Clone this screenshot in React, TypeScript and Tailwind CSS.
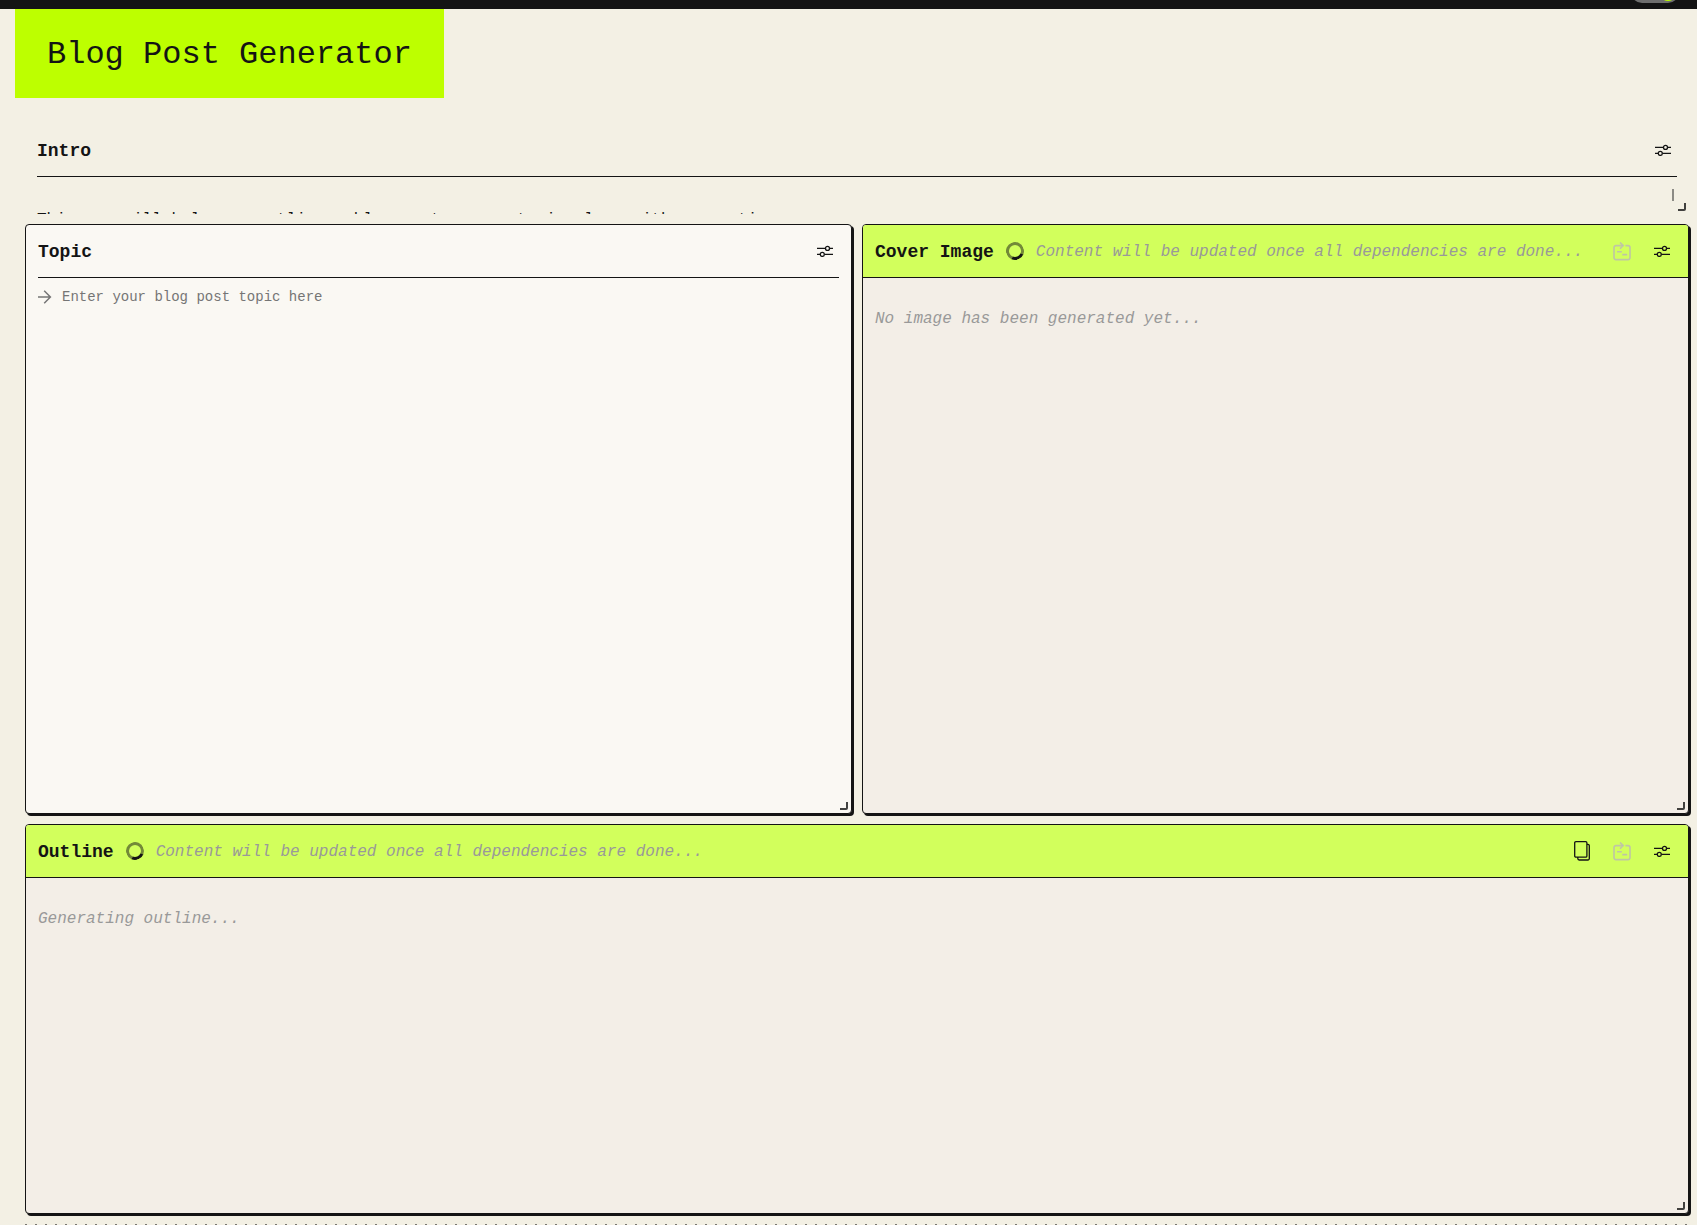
import { useState } from "react";
import type { ReactNode } from "react";

const mono = { fontFamily: "'Liberation Mono', monospace" } as const;

const WAITING = "Content will be updated once all dependencies are done...";

/* ─── Icons ─── */
function SlidersIcon() {
  return (
    <svg width="16" height="12" viewBox="0 0 16 12" fill="none" stroke="currentColor" strokeWidth="1.3" aria-hidden="true">
      <path d="M0 3.4H8.2M12.8 3.4H16M0 9.4H3M7.6 9.4H16" />
      <circle cx="10.5" cy="3.4" r="2" />
      <circle cx="5.3" cy="9.4" r="2" />
    </svg>
  );
}

function InsertIcon() {
  return (
    <svg width="18" height="19" viewBox="0 0 18 19" fill="none" stroke="currentColor" strokeWidth="1.6" aria-hidden="true">
      <path d="M10 3.6H3a2 2 0 0 0-2 2v10a2 2 0 0 0 2 2h12a2 2 0 0 0 2-2v-10a2 2 0 0 0-2-2h-2.6" />
      <path d="M7 .5l3.2 3.1L7 6.8M4 9.8h4.8M9.3 12.6h4.9" />
    </svg>
  );
}

function CopyIcon() {
  return (
    <svg width="16" height="20" viewBox="0 0 16 20" fill="none" stroke="currentColor" strokeWidth="1.3" aria-hidden="true">
      <rect x=".7" y=".7" width="12.2" height="15.4" rx="1.2" />
      <path d="M12.9 3.4h1a1.4 1.4 0 0 1 1.4 1.4v12.8a1.4 1.4 0 0 1-1.4 1.4H5.2a1.4 1.4 0 0 1-1.4-1.4v-1.5" />
    </svg>
  );
}

function ArrowIcon() {
  return (
    <svg className="mt-[3px] shrink-0" width="14" height="14" viewBox="0 0 14 14" fill="none" stroke="currentColor" strokeWidth="1.5" aria-hidden="true">
      <path d="M0 7h12.4M6.2 .8L12.4 7 6.2 13.2" />
    </svg>
  );
}

function IconButton({ label, disabled, children }: { label: string; disabled?: boolean; children: ReactNode }) {
  return (
    <button
      type="button"
      aria-label={label}
      disabled={disabled}
      className="w-7 h-7 flex items-center justify-center text-[#141414] disabled:text-[#bfc5a6]"
    >
      {children}
    </button>
  );
}

/* ─── Card header row ─── */
function CardHeader({ title, pending, copyable }: { title: string; pending?: boolean; copyable?: boolean }) {
  return (
    <div className="h-[52px] flex items-center justify-between">
      <div className="flex items-center gap-3 min-w-0">
        <h2 className="pt-[2px] text-[18px] leading-6 font-bold whitespace-nowrap">{title}</h2>
        {pending && (
          <>
            <span className="w-[18px] h-[18px] shrink-0 rounded-full border-[3px] border-[#141414]/50 border-b-[#141414] -rotate-[22deg]" />
            <span className="pt-[2px] text-base leading-6 italic text-[#999999] truncate">{WAITING}</span>
          </>
        )}
      </div>
      <div className="flex items-center gap-3 shrink-0">
        {copyable && <IconButton label="Copy"><CopyIcon /></IconButton>}
        {pending && <IconButton label="Insert content" disabled><InsertIcon /></IconButton>}
        <IconButton label={`${title} settings`}><SlidersIcon /></IconButton>
      </div>
    </div>
  );
}

function ResizeHandle() {
  return <span className="absolute right-[3px] bottom-[3px] w-2 h-2 border-r-2 border-b-2 border-[#141414]/80 rounded-br-[2px] cursor-se-resize" />;
}

/* ─── Card whose content is still being generated ─── */
function PendingCard({ title, message, copyable }: { title: string; message: string; copyable?: boolean }) {
  return (
    <section className="relative h-full rounded-[4px] border border-[#141414] bg-[#f3eee7] shadow-[2px_2px_0_#141414]">
      <div className="px-3 rounded-t-[3px] border-b border-[#141414] bg-[#d2ff5c]">
        <CardHeader title={title} pending copyable={copyable} />
      </div>
      <p className="px-3 pt-[29px] text-base leading-6 italic text-[#999999]">{message}</p>
      <ResizeHandle />
    </section>
  );
}

export default function App() {
  const [topic, setTopic] = useState("");
  const [live, setLive] = useState(true);

  return (
    <div className="min-h-screen bg-[#f3f0e4] text-[#141414]" style={mono}>
      {/* Top bar, only its lower edge stays in view */}
      <header className="h-[9px] pr-[18px] pb-[6px] flex items-end justify-end overflow-hidden bg-[#141414]">
        <label className="w-12 h-[22px] p-[2px] shrink-0 flex justify-end rounded-full bg-[#6e6e6e]">
          <input
            type="checkbox"
            aria-label="Live mode"
            checked={live}
            onChange={(e) => setLive(e.target.checked)}
            className="appearance-none w-[18px] h-[18px] rounded-full bg-[#bdff00]"
          />
        </label>
      </header>

      <h1 className="w-fit ml-[15px] px-8 pt-[26px] pb-[23px] bg-[#bdff00] text-[32px] leading-10">
        Blog Post Generator
      </h1>

      <main className="pt-[26px] pl-[25px] pr-2 grid grid-cols-2 gap-[10px]">
        {/* Intro */}
        <section className="col-span-2 relative h-[90px] overflow-hidden px-3">
          <div className="border-b border-[#141414]">
            <CardHeader title="Intro" />
          </div>
          <div className="flex justify-between">
            <p className="pt-[31px] text-base leading-6">
              This app will help you outline a blog post on any topic along with a creative cover
            </p>
            <span className="mt-3 mr-[3px] w-[2px] h-3 bg-[#8c8b85]" />
          </div>
          <ResizeHandle />
        </section>

        {/* Topic */}
        <section className="relative h-[590px] flex flex-col px-3 rounded-[4px] border border-[#141414] bg-[#faf8f3] shadow-[2px_2px_0_#141414]">
          <div className="border-b border-[#141414]">
            <CardHeader title="Topic" />
          </div>
          <label className="flex-1 pt-[9px] flex gap-[10px] text-[#757575]">
            <ArrowIcon />
            <textarea
              aria-label="Topic"
              value={topic}
              onChange={(e) => setTopic(e.target.value)}
              placeholder="Enter your blog post topic here"
              className="flex-1 resize-none bg-transparent text-sm leading-5 text-[#141414] placeholder:text-[#757575] outline-none"
            />
          </label>
          <ResizeHandle />
        </section>

        <PendingCard title="Cover Image" message="No image has been generated yet..." />

        <div className="col-span-2 h-[390px]">
          <PendingCard title="Outline" message="Generating outline..." copyable />
        </div>

        {/* Drop line for the next card */}
        <div className="col-span-2 h-px bg-[repeating-linear-gradient(90deg,#77756f_0_2px,transparent_2px_10px)]" />
      </main>
    </div>
  );
}
